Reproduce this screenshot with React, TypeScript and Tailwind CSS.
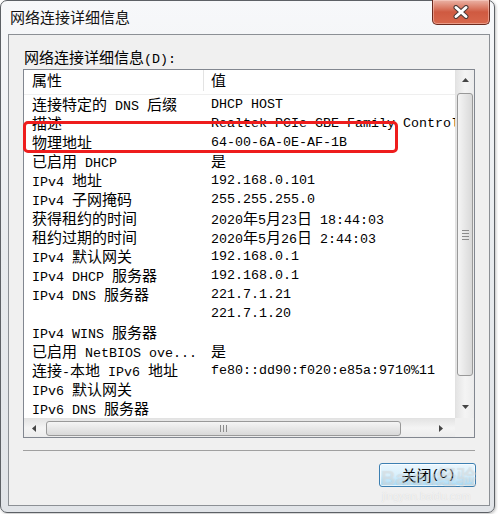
import type { ReactNode } from 'react';

// SimSun-like mix: half-width mono for latin, full-width CJK glyphs
const CJK_RUN = /([\u2E80-\u9FFF\u3000-\u303F\uFF00-\uFFEF]+)/;

const ROWS: [string, string][] = [
  ['连接特定的 DNS 后缀', 'DHCP HOST'],
  ['描述', 'Realtek PCIe GBE Family Controller'],
  ['物理地址', '64-00-6A-0E-AF-1B'],
  ['已启用 DHCP', '是'],
  ['IPv4 地址', '192.168.0.101'],
  ['IPv4 子网掩码', '255.255.255.0'],
  ['获得租约的时间', '2020年5月23日 18:44:03'],
  ['租约过期的时间', '2020年5月26日 2:44:03'],
  ['IPv4 默认网关', '192.168.0.1'],
  ['IPv4 DHCP 服务器', '192.168.0.1'],
  ['IPv4 DNS 服务器', '221.7.1.21'],
  ['', '221.7.1.20'],
  ['IPv4 WINS 服务器', ''],
  ['已启用 NetBIOS ove...', '是'],
  ['连接-本地 IPv6 地址', 'fe80::dd90:f020:e85a:9710%11'],
  ['IPv6 默认网关', ''],
  ['IPv6 DNS 服务器', ''],
];

function Mixed({ text }: { text: string }) {
  const parts = text.split(CJK_RUN);
  return (
    <>
      {parts.map((part, i) =>
        i % 2 === 1 ? (
          <span key={i} className="font-['Noto_Sans_CJK_SC',sans-serif] text-[15px]">
            {part}
          </span>
        ) : (
          <span key={i}>{part}</span>
        ),
      )}
    </>
  );
}

function Arrow({ dir }: { dir: 'up' | 'down' | 'left' | 'right' }) {
  const points = {
    up: '0,4 7,4 3.5,0',
    down: '0,0 7,0 3.5,4',
    left: '4,0 4,7 0,3.5',
    right: '0,0 0,7 4,3.5',
  }[dir];
  const vertical = dir === 'up' || dir === 'down';
  return (
    <svg width={vertical ? 7 : 4} height={vertical ? 4 : 7} viewBox={vertical ? '0 0 7 4' : '0 0 4 7'}>
      <polygon points={points} fill="#454545" />
    </svg>
  );
}

function CloseButton() {
  return (
    <div className="ml-auto mr-[4px] -mt-px flex h-[25px] w-[58px] items-center justify-center rounded-b-[5px] border border-t-0 border-[#6b2a1e] bg-gradient-to-b from-[#eab3a6] via-[#cf5a41] to-[#d8674c] shadow-[inset_0_0_0_1px_rgba(255,220,210,0.45)]">
      <svg width="18" height="14" viewBox="0 0 18 14">
        <path d="M4 2.5 L14 11.5 M14 2.5 L4 11.5" stroke="#4a3a38" strokeWidth="5" strokeLinecap="round" />
        <path d="M4 2.5 L14 11.5 M14 2.5 L4 11.5" stroke="#ffffff" strokeWidth="3" strokeLinecap="round" />
      </svg>
    </div>
  );
}

function VerticalScrollbar() {
  return (
    <div className="flex w-[19px] flex-col border-l border-[#e2e2e2] bg-gradient-to-r from-[#e4e4e4] via-[#f4f4f4] to-[#ececec]">
      <div className="flex h-[20px] items-center justify-center">
        <Arrow dir="up" />
      </div>
      <div className="mx-[1px] mt-[3px] flex h-[283px] items-center justify-center rounded-[3px] border border-[#999999] bg-gradient-to-r from-[#f5f5f5] to-[#d9d9d9]">
        <div className="flex flex-col gap-[2px]">
          <div className="h-px w-[7px] bg-[#8c8c8c]" />
          <div className="h-px w-[7px] bg-[#8c8c8c]" />
          <div className="h-px w-[7px] bg-[#8c8c8c]" />
          <div className="h-px w-[7px] bg-[#8c8c8c]" />
        </div>
      </div>
      <div className="flex-1" />
      <div className="flex h-[22px] items-center justify-center">
        <Arrow dir="down" />
      </div>
    </div>
  );
}

function HorizontalScrollbar() {
  return (
    <div className="flex flex-1 items-center border-t border-[#e2e2e2] bg-gradient-to-b from-[#e4e4e4] via-[#f4f4f4] to-[#ececec]">
      <div className="flex h-full w-[20px] items-center justify-center">
        <Arrow dir="left" />
      </div>
      <div className="ml-[2px] flex h-[15px] w-[355px] items-center justify-center rounded-[3px] border border-[#999999] bg-gradient-to-b from-[#f5f5f5] to-[#d9d9d9]">
        <div className="flex gap-[2px]">
          <div className="h-[7px] w-px bg-[#8c8c8c]" />
          <div className="h-[7px] w-px bg-[#8c8c8c]" />
          <div className="h-[7px] w-px bg-[#8c8c8c]" />
        </div>
      </div>
      <div className="flex-1" />
      <div className="flex h-full w-[28px] items-center justify-center">
        <Arrow dir="right" />
      </div>
    </div>
  );
}

function Row({ name, value }: { name: string; value: string }) {
  return (
    <div className="flex h-[19px] items-center whitespace-nowrap leading-[19px]">
      <div className="w-[180px] shrink-0 overflow-hidden pl-[8px]">
        <Mixed text={name} />
      </div>
      <div className="pl-[7px]">
        <Mixed text={value} />
      </div>
    </div>
  );
}

function DetailsList({ children }: { children?: ReactNode }) {
  return (
    <div className="mx-[14px] mt-[4px] flex h-[369px] flex-col border border-[#828790] bg-white">
      <div className="flex h-[348px]">
        <div className="flex-1 overflow-hidden">
          <div className="flex h-[25px] items-center whitespace-nowrap border-b border-[#efefef] pb-[3px]">
            <div className="flex h-full w-[180px] shrink-0 items-center border-r border-[#e3e3e3] pl-[8px]">
              <Mixed text="属性" />
            </div>
            <div className="pl-[7px]">
              <Mixed text="值" />
            </div>
          </div>
          {ROWS.map(([name, value], i) => (
            <Row key={i} name={name} value={value} />
          ))}
        </div>
        <VerticalScrollbar />
      </div>
      <div className="flex h-[19px]">
        <HorizontalScrollbar />
        <div className="w-[19px] bg-[#f0f0f0]" />
      </div>
      {children}
    </div>
  );
}

export default function App() {
  return (
    <div className="relative h-[514px] w-[498px] overflow-hidden bg-white font-['Liberation_Mono',monospace] text-[13.34px] text-black">
      {/* Window frame */}
      <div className="flex h-[513px] w-[495px] flex-col rounded-[7px] border border-[#5d6166] bg-gradient-to-b from-[#f7f8fa] via-[#e8ebee] to-[#e1e4e8] shadow-[1px_1px_3px_rgba(0,0,0,0.25)]">
        {/* Title bar */}
        <div className="flex h-[33px] items-start">
          <div className="self-center pl-[9px] pb-px font-['Noto_Sans_CJK_SC',sans-serif] text-[15px] text-[#141414] [text-shadow:0_0_6px_#ffffff]">
            网络连接详细信息
          </div>
          <CloseButton />
        </div>

        {/* Client area */}
        <div className="ml-[7px] flex h-[472px] w-[482px] flex-col border border-[#8c9095] bg-[#f0f0f0]">
          <div className="ml-[15px] mt-[14px] h-[16px] whitespace-nowrap leading-[16px]">
            <Mixed text="网络连接详细信息(D):" />
          </div>

          <DetailsList />

          <div className="mx-[14px] mt-[12px] h-px bg-[#a0a0a0]" />

          <div className="mr-[13px] mt-[12px] flex h-[24px] w-[97px] items-center justify-center self-end rounded-[3px] border border-[#3c7fb1] bg-gradient-to-b from-[#eaf6fd] via-[#d9f0fc] to-[#a9dbf6] pl-[2px] shadow-[inset_0_0_0_1px_rgba(255,255,255,0.7)]">
            <Mixed text="关闭(C)" />
          </div>
        </div>
      </div>

      {/* Red annotation box over the MAC address row */}
      <div className="absolute left-[23px] top-[121px] h-[32px] w-[375px] rounded-[5px] border-[3px] border-[#ee1d1d]" />

      {/* Site watermark */}
      <div className="absolute left-[381px] top-[466px] whitespace-nowrap font-['Liberation_Sans',sans-serif] text-[20px] font-bold leading-[22px] text-white/40 [text-shadow:0_0_1px_rgba(0,0,0,0.15)]">
        Baidu<span className="font-['Noto_Sans_CJK_SC',sans-serif]">经验</span>
      </div>
      <div className="absolute left-[382px] top-[490px] whitespace-nowrap font-['Liberation_Sans',sans-serif] text-[11px] leading-[12px] text-white/70 [text-shadow:0_0_1px_rgba(0,0,0,0.15)]">
        jingyan.baidu.com
      </div>
    </div>
  );
}
